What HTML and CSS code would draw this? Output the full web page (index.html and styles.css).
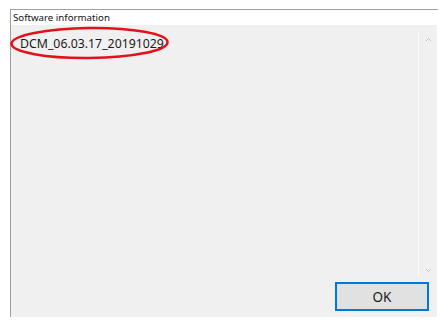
FILE: index.html
```html
<!DOCTYPE html>
<html lang="en">
<head>
    <meta charset="UTF-8">
    <title>Software information</title>
    <link rel="stylesheet" href="styles.css">
</head>
<body>
    <div class="frame">
        <div class="title">Software information</div>
        <div class="panel">
            <div class="content">
                <div class="list">
                    <div class="item">DCM_06.03.17_20191029</div>
                </div>
                <div class="scrollbar">
                    <svg class="arrow" width="7" height="5" viewBox="0 0 7 5"><path d="M1 4 L3.5 1.5 L6 4" fill="none" stroke="#c4c4c4" stroke-width="1"/></svg>
                    <svg class="arrow" width="7" height="5" viewBox="0 0 7 5"><path d="M1 1 L3.5 3.5 L6 1" fill="none" stroke="#c4c4c4" stroke-width="1"/></svg>
                </div>
            </div>
            <div class="actions">
                <button class="ok">OK</button>
            </div>
        </div>
    </div>

    <!-- red marker drawn over the version -->
    <svg class="marker" width="162" height="36" viewBox="0 0 162 36">
        <ellipse cx="80.5" cy="17" rx="78" ry="15" fill="none" stroke="#e3111b" stroke-width="2.6" transform="rotate(-0.6 80.5 17)"/>
    </svg>
</body>
</html>
```

FILE: styles.css
```css
/* General styling */
body {
    margin: 0;
    padding: 0;
    background: #ffffff;
    font-family: "Noto Sans", "Open Sans", sans-serif;
    color: #1b1b1b;
    position: relative;
    width: 446px;
    height: 326px;
    overflow: hidden;
}

/* Outer frame */
.frame {
    margin: 9px 0 0 10px;
    width: 427px;
    height: 307px;
    border-top: 1px solid #a0a0a0;
    border-left: 1px solid #a0a0a0;
    display: flex;
    flex-direction: column;
}

.title {
    height: 15px;
    font-size: 9.7px;
    line-height: 15px;
    padding-left: 2px;
    color: #111;
}

/* Gray panel */
.panel {
    flex: 1;
    background: #f0f0f0;
    margin-right: 1px;
    display: flex;
    flex-direction: column;
}

.content {
    flex: 1;
    display: flex;
}

.list {
    flex: 1;
    padding: 11px 0 0 9px;
}

.item {
    font-size: 12.3px;
    line-height: 16px;
    color: #1a1a1a;
}

.scrollbar {
    width: 18px;
    margin-top: 8px;
    border-left: 1px solid #fbfbfb;
    display: flex;
    flex-direction: column;
    justify-content: space-between;
    align-items: center;
    padding: 4px 0 4px 0;
}

.arrow {
    display: block;
}

/* Button row */
.actions {
    display: flex;
    justify-content: flex-end;
    padding: 5px 8px 6px 0;
}

.ok {
    width: 94px;
    height: 29px;
    background: #e1e1e1;
    border: 2px solid #0078d7;
    font-family: "Noto Sans", "Open Sans", sans-serif;
    font-size: 13.5px;
    color: #1b1b1b;
    padding: 0;
}

.marker {
    position: absolute;
    left: 9px;
    top: 26px;
}
```
